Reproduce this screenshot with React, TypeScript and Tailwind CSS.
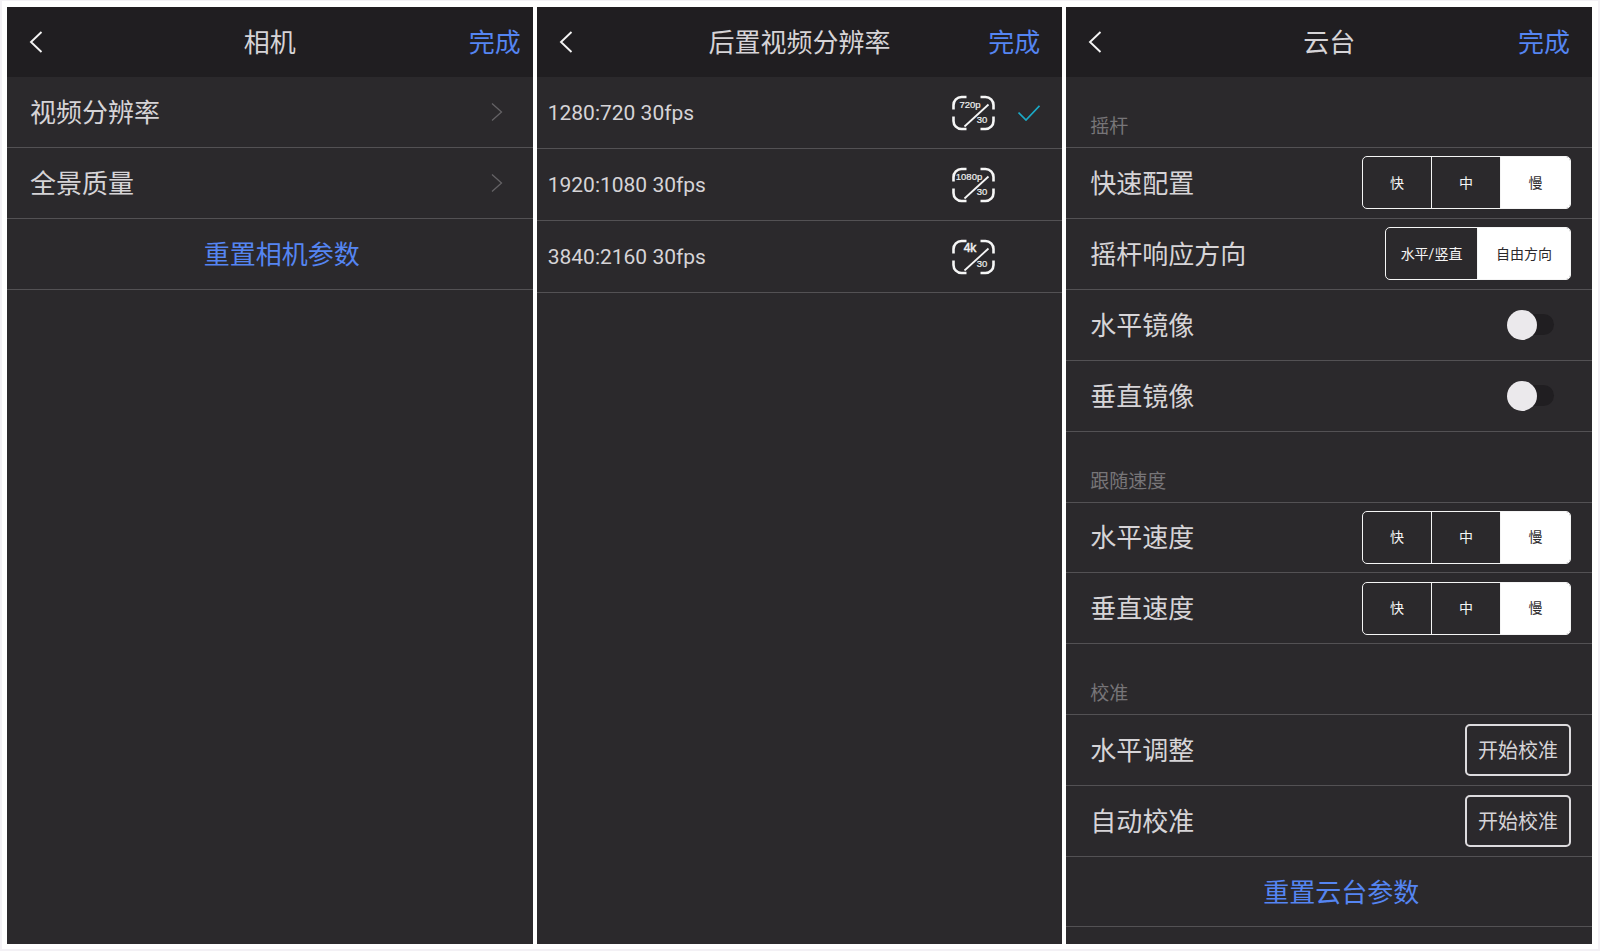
import { useState } from "react";
import type { ReactNode } from "react";

const RESOLUTIONS = [
  { label: "1280:720 30fps", badge: "720p", x: 18, size: 9.5, bold: false },
  { label: "1920:1080 30fps", badge: "1080p", x: 17, size: 9.5, bold: false },
  { label: "3840:2160 30fps", badge: "4k", x: 18, size: 12, bold: true },
];

const TEXT = "pt-[2px] text-[26px] leading-8";
const RESET = "w-full border-b border-[#535154] pt-[2px] pl-6 text-center text-[26px] leading-8 text-[#5585f2]";
const SPEEDS = ["快", "中", "慢"];

function Panel({ children }: { children: ReactNode }) {
  return <section className="flex min-w-0 flex-1 flex-col bg-[#2b292c]">{children}</section>;
}

function Header({ title, wide }: { title: string; wide?: boolean }) {
  return (
    <header
      className={`grid h-[70px] shrink-0 grid-cols-[1fr_auto_1fr] items-center bg-[#201e21] ${
        wide ? "px-3" : "px-[22px]"
      }`}
    >
      <button type="button" aria-label="返回" className={`justify-self-start ${wide ? "pl-[10px]" : ""}`}>
        <svg width="14" height="24" viewBox="0 0 14 24" fill="none" stroke="#f4f4f4" strokeWidth="1.9">
          <path d="M12.5 2 2 12l10.5 10" />
        </svg>
      </button>
      <h2 className={TEXT}>{title}</h2>
      <button type="button" className={`justify-self-end text-[#5585f2] ${TEXT}`}>
        完成
      </button>
    </header>
  );
}

function LinkRow({ label }: { label: string }) {
  return (
    <li>
      <a
        href="#"
        className="flex h-[71px] items-center justify-between border-b border-[#535154] pr-[30px] pl-[23px]"
      >
        <span className={TEXT}>{label}</span>
        <svg width="12" height="20" viewBox="0 0 12 20" fill="none" stroke="#646265" strokeWidth="1.3">
          <path d="M1 1.5 10.5 10 1 18.5" />
        </svg>
      </a>
    </li>
  );
}

function ResolutionIcon({ text, x, size, bold }: { text: string; x: number; size: number; bold: boolean }) {
  return (
    <svg width="43" height="36" viewBox="0 0 43 36" fill="none" stroke="#f6f6f6" aria-hidden="true">
      <path
        strokeWidth="2.6"
        d="M1.5 14.5V10a8 8 0 0 1 8-8h5M28.5 2h5a8 8 0 0 1 8 8v4.5M1.5 21.5V26a8 8 0 0 0 8 8h5M28.5 34h5a8 8 0 0 0 8-8v-4.5"
      />
      <path strokeWidth="1.8" d="M12.5 31.5 36.5 9.5" />
      <g
        fill="#f0f0f0"
        stroke="#f0f0f0"
        strokeWidth="0.2"
        textAnchor="middle"
        fontFamily='"Liberation Sans", sans-serif'
      >
        <text x={x} y="13" fontSize={size} strokeWidth={bold ? "0.5" : "0.2"}>
          {text}
        </text>
        <text x="30" y="28" fontSize="9.5">
          30
        </text>
      </g>
    </svg>
  );
}

function Row({ label, control, htmlFor }: { label: string; control: ReactNode; htmlFor?: string }) {
  return (
    <div className="flex min-h-[66px] flex-1 items-center justify-between border-b border-[#535154] pr-[21px] pl-6">
      {htmlFor ? (
        <label htmlFor={htmlFor} className={TEXT}>
          {label}
        </label>
      ) : (
        <span className={TEXT}>{label}</span>
      )}
      {control}
    </div>
  );
}

function SectionTitle({ children }: { children: ReactNode }) {
  return (
    <div className="flex min-h-[66px] flex-1 items-end border-b border-[#535154] pl-6">
      <h3 className="pb-[6px] text-[19px] leading-7 text-[#777578]">{children}</h3>
    </div>
  );
}

function Segmented({ label, options, initial, wide }: { label: string; options: string[]; initial: number; wide?: boolean }) {
  const [active, setActive] = useState(initial);
  return (
    <div
      role="group"
      aria-label={label}
      className="flex h-[53px] divide-x divide-[#f5f5f5] overflow-hidden rounded-[5px] border border-[#f5f5f5]"
    >
      {options.map((option, i) => (
        <button
          key={option}
          type="button"
          aria-pressed={i === active}
          onClick={() => setActive(i)}
          className={`pt-px text-[14px] ${wide ? "w-[92px]" : "w-[69px]"} ${
            i === active ? "bg-white text-[#2b292c]" : "text-[#f5f5f5]"
          }`}
        >
          {option}
        </button>
      ))}
    </div>
  );
}

function Toggle({ id }: { id: string }) {
  return (
    <input
      id={id}
      type="checkbox"
      role="switch"
      className="mr-[17px] flex h-[21px] w-[47px] appearance-none items-center rounded-full bg-[#201e21] before:size-[30px] before:shrink-0 before:rounded-full before:bg-[#ebe9ec] before:content-[''] checked:justify-end checked:bg-[#5585f2]"
    />
  );
}

function CalibrateButton() {
  return (
    <button type="button" className="h-[52px] w-[106px] rounded-[5px] border-2 border-[#dddbde] pt-[2px] text-[20px] leading-7">
      开始校准
    </button>
  );
}

export default function App() {
  const [selected, setSelected] = useState(0);
  return (
    <div className="min-h-screen bg-[#f3f1f5] px-[2px] pt-px pb-[2px] font-['Roboto','Noto_Sans_CJK_SC',sans-serif] text-[#d6d4d7]">
      <main className="flex min-h-[948px] gap-[4px] bg-white pt-[6px] pr-[6px] pb-[5px] pl-[5px]">
        <Panel>
          <Header title="相机" wide />
          <ul>
            <LinkRow label="视频分辨率" />
            <LinkRow label="全景质量" />
          </ul>
          <button type="button" className={`h-[71px] ${RESET}`}>
            重置相机参数
          </button>
        </Panel>

        <Panel>
          <Header title="后置视频分辨率" />
          <ul>
            {RESOLUTIONS.map((r, i) => (
              <li key={r.label}>
                <button
                  type="button"
                  aria-pressed={i === selected}
                  onClick={() => setSelected(i)}
                  className="flex h-[72px] w-full items-center gap-[23px] border-b border-[#535154] pr-[22px] pl-[11px] text-left text-[21px] leading-7"
                >
                  <span className="flex-1">{r.label}</span>
                  <ResolutionIcon text={r.badge} x={r.x} size={r.size} bold={r.bold} />
                  <span className="w-[22px]">
                    {i === selected && (
                      <svg width="22" height="16" viewBox="0 0 22 16" fill="none" stroke="#1ba9c6" strokeWidth="1.7">
                        <path d="M.5 7.5 8 15 21.5.8" />
                      </svg>
                    )}
                  </span>
                </button>
              </li>
            ))}
          </ul>
        </Panel>

        <Panel>
          <Header title="云台" />
          <div className="flex flex-1 flex-col pb-[17px]">
            <SectionTitle>摇杆</SectionTitle>
            <Row label="快速配置" control={<Segmented label="快速配置" options={SPEEDS} initial={2} />} />
            <Row
              label="摇杆响应方向"
              control={<Segmented label="摇杆响应方向" options={["水平/竖直", "自由方向"]} initial={1} wide />}
            />
            <Row label="水平镜像" htmlFor="mirror-x" control={<Toggle id="mirror-x" />} />
            <Row label="垂直镜像" htmlFor="mirror-y" control={<Toggle id="mirror-y" />} />
            <SectionTitle>跟随速度</SectionTitle>
            <Row label="水平速度" control={<Segmented label="水平速度" options={SPEEDS} initial={2} />} />
            <Row label="垂直速度" control={<Segmented label="垂直速度" options={SPEEDS} initial={2} />} />
            <SectionTitle>校准</SectionTitle>
            <Row label="水平调整" control={<CalibrateButton />} />
            <Row label="自动校准" control={<CalibrateButton />} />
            <div className="flex min-h-[66px] flex-1">
              <button type="button" className={RESET}>
                重置云台参数
              </button>
            </div>
          </div>
        </Panel>
      </main>
    </div>
  );
}
